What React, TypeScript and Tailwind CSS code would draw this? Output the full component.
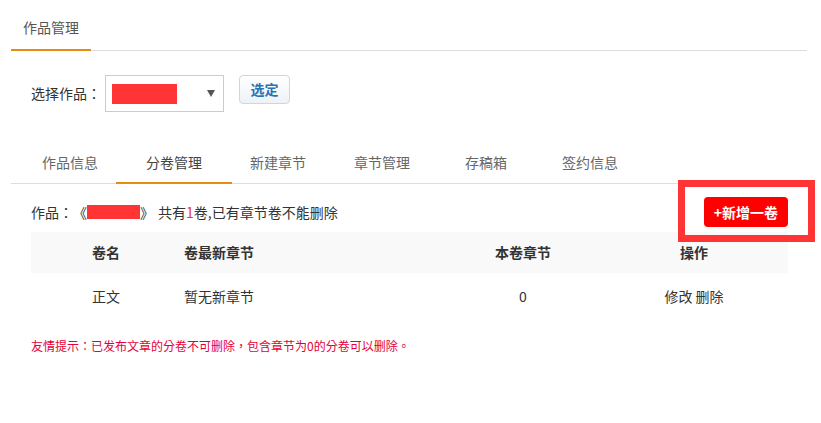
import React from 'react';

const tabs = ['作品信息', '分卷管理', '新建章节', '章节管理', '存稿箱', '签约信息'];

export default function App() {
  return (
    <div
      className="relative w-[821px] h-[423px] bg-white text-[#333] overflow-hidden [text-spacing-trim:space-all]"
      style={{ fontFamily: '"Noto Sans CJK SC", "Noto Sans", sans-serif' }}
    >
      {/* Top header */}
      <div className="ml-[11px] mr-[14px] flex border-b border-[#dddddd]">
        <div className="px-[12px] pt-[17px] pb-[12px] text-[14px] leading-[20px] text-[#555] border-b-2 border-[#e38d13] -mb-px">
          作品管理
        </div>
      </div>

      {/* Select row */}
      <div className="mt-[24px] pl-[31px] flex items-start">
        <span className="mt-[8px] text-[14px] leading-[20px] text-[#333]">
          选择作品<span style={{ fontFamily: '"Noto Sans CJK TC", sans-serif' }}>：</span>
        </span>
        <div className="ml-[4px] w-[119px] h-[37px] border border-[#cccccc] flex items-center pl-[6px] pr-[8px]">
          <div className="w-[65px] h-[20px] bg-[#ff3434]" />
          <div className="ml-auto w-0 h-0 border-l-[4px] border-r-[4px] border-t-[7px] border-l-transparent border-r-transparent border-t-[#555]" />
        </div>
        <button className="ml-[15px] w-[51px] h-[29px] rounded-[4px] border border-[#c5d9ec] bg-gradient-to-b from-white to-[#eef2f7] text-[14px] font-bold text-[#2a72b5]">
          选定
        </button>
      </div>

      {/* Tabs */}
      <div className="mt-[30px] ml-[11px] mr-[14px] flex h-[42px] border-b border-[#dddddd] pl-[7px]">
        {tabs.map((t, i) => (
          <div
            key={t}
            className={`relative w-[104px] flex items-center justify-center text-[14px] ${
              i === 1 ? 'text-[#444]' : 'text-[#666]'
            }`}
          >
            {t}
            {i === 1 && (
              <div className="absolute -left-[6px] -right-[6px] -bottom-[1px] h-[2px] bg-[#e38d13]" />
            )}
          </div>
        ))}
      </div>

      {/* Info row */}
      <div className="ml-[31px] mr-[33px] mt-[13px] flex items-center">
        <div
          className="flex items-center text-[14px] text-[#333]"
          style={{ fontFamily: '"Noto Sans CJK TC", "Noto Sans CJK SC", sans-serif' }}
        >
          <span>作品：《</span>
          <span className="inline-block w-[53px] h-[14px] bg-[#ff3434]" />
          <span>》</span>
          <span className="ml-[4px]">
            共有<span className="text-[#e4393c]">1</span>卷,已有章节卷不能删除
          </span>
        </div>
        <button className="ml-auto w-[84px] h-[30px] rounded-[4px] bg-[#ff0000] text-white text-[14px] font-bold">
          +新增一卷
        </button>
      </div>

      {/* Table */}
      <div className="ml-[31px] mr-[33px] mt-[5px] text-[14px]">
        <div className="flex h-[41px] items-center bg-[#f9f9f9] font-bold text-[#333]">
          <div className="w-[150px] text-center">卷名</div>
          <div className="w-[265px] pl-[3px]">卷最新章节</div>
          <div className="w-[154px] text-center">本卷章节</div>
          <div className="flex-1 text-center">操作</div>
        </div>
        <div className="flex h-[46px] items-center text-[#333]">
          <div className="w-[150px] text-center">正文</div>
          <div className="w-[265px] pl-[3px]">暂无新章节</div>
          <div className="w-[154px] text-center">0</div>
          <div className="flex-1 text-center">修改 删除</div>
        </div>
      </div>

      {/* Tip */}
      <div
        className="ml-[31px] mt-[18px] text-[12px] text-[#e4003a]"
        style={{ fontFamily: '"Noto Sans CJK TC", "Noto Sans CJK SC", sans-serif' }}
      >
        友情提示：已发布文章的分卷不可删除，包含章节为0的分卷可以删除。
      </div>

      {/* Highlight box overlay */}
      <div className="absolute left-[678px] top-[180px] w-[137px] h-[62px] border-[7px] border-[#ff3434]" />
    </div>
  );
}
